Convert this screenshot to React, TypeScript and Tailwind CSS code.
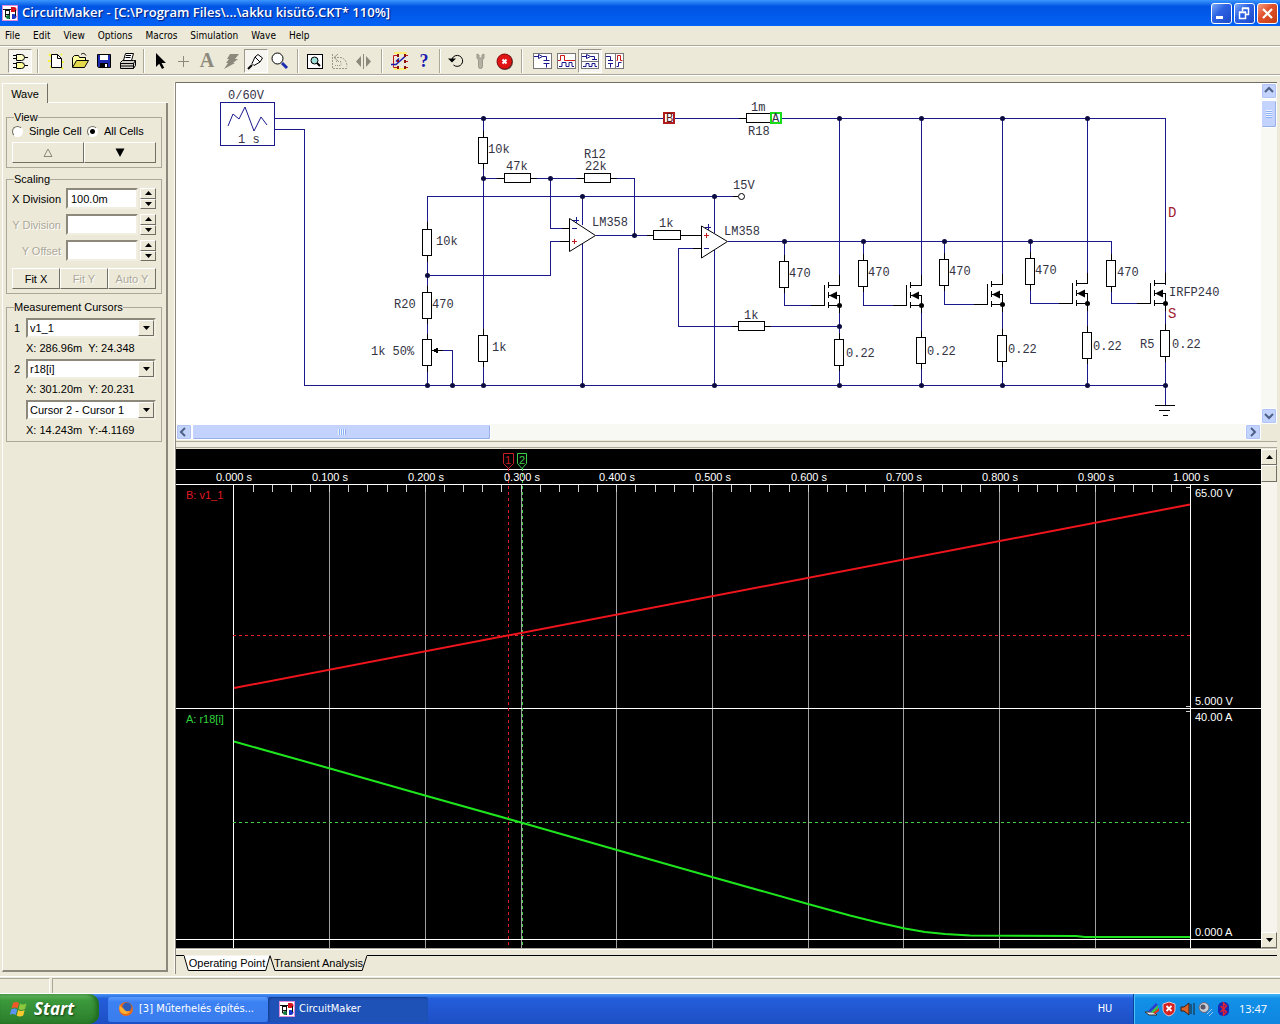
import React from 'react';

const NAVY = '#1a1a8c';

const RAISED = 'border border-t-white border-l-white border-r-[#716f64] border-b-[#716f64] bg-[#ece9d8]';
const SUNKEN = 'border-2 border-t-[#8c897c] border-l-[#8c897c] border-r-[#f1efe2] border-b-[#f1efe2] bg-white';

const AppIcon = ({ className }: { className?: string }) => (
  <svg className={className} viewBox="0 0 16 16" width="16" height="16" aria-hidden="true">
    <rect width="16" height="16" fill="#fff" />
    <rect x="0.5" y="0.5" width="15" height="15" fill="none" stroke="#e08ad8" />
    <path d="M1 4.500h8M3.500 4v8h4M7.500 9v5" stroke="#111" fill="none" />
    <rect x="3.500" y="5.500" width="4" height="4" fill="#fff" stroke="#111" />
    <path d="M9 2h3a2.500 2.500 0 010 5H9z" fill="#d8121f" />
    <path d="M10 9h2a2.500 2.500 0 010 5h-2z" fill="#1b37c9" />
    <circle cx="6" cy="12" r="2" fill="#157c3d" />
    <path d="M13.500 5v6" stroke="#111" />
  </svg>
);

/* ---------- toolbar ---------- */

const icons: Record<string, React.ReactNode> = {
  Gates: (
    <g stroke="#000">
      <path d="M3 4.500h4M3 7.500h4M14 6.500h4M3 12.500h4M3 16.500h4M14 14.500h4" />
      <path d="M6.500 3.500h5a3 3 0 010 6h-5z" fill="#ffffc8" />
      <path d="M6.500 11.500h5a3 3 0 010 6h-5z" fill="#ffff9c" />
    </g>
  ),
  New: (
    <>
      <path d="M3 3l3 3M2 10h3M4 17l2-2M15 16l2 2M16 11h2M15 3l1 1" stroke="#f5f53c" strokeWidth="2" />
      <path d="M5.500 3.500h6l4 4v9h-10z" fill="#fff" stroke="#000" />
      <path d="M11.500 3.500v4h4" fill="none" stroke="#000" />
    </>
  ),
  Open: (
    <>
      <path d="M2.500 16V6.500l2-2h4l1 2h6v3" fill="#ffff9c" stroke="#000" />
      <path d="M2.500 16.500l4-7h12l-4 7z" fill="#e4d94a" stroke="#000" />
      <path d="M11 3.500c2-2 4-1 5 1" fill="none" stroke="#000" />
    </>
  ),
  Save: (
    <>
      <path d="M3.500 3.500h13v13h-12l-1-1z" fill="#1c2bb0" stroke="#000" />
      <rect x="6" y="4" width="8" height="5" fill="#fff" />
      <rect x="6" y="12" width="8" height="5" fill="#000" />
      <rect x="11" y="13" width="2" height="3" fill="#fff" />
    </>
  ),
  Print: (
    <g stroke="#000">
      <path d="M5.500 9.500l2-7h8l-2 7z" fill="#fff" />
      <path d="M8 4.500h5M7.500 6.500h5" />
      <path d="M2.500 11.500l2-2h11l2 0v5l-2 3h-13z" fill="#d4d0c8" />
      <path d="M2.500 12.500h13v5M15.500 12.500l2-3M3 15h12" fill="none" />
    </g>
  ),
  Arrow: <path d="M6 2v14l3.200-3.200L12 18l2.200-1.200-2.600-4.800H16z" fill="#000" />,
  Wire: <path d="M9.500 5v11M4 10.500h11" stroke="#8c897c" strokeWidth="1" />,
  Text: (
    <text x="9" y="16" textAnchor="middle" fill="#8c897c" className="font-['Liberation_Serif',serif] text-[20px] font-bold">
      A
    </text>
  ),
  Delete: <path d="M8 3h9l-4 5h3l-5 4h2L2 18l4-6H4l3-4H5z" fill="#8c897c" />,
  Probe: (
    <>
      <path d="M2 18l4-4" stroke="#000" strokeWidth="2" />
      <path d="M6 12.500l3-6.500 3-2.500 4.500 3.500-2.500 4-6 3.500z" fill="#fff" stroke="#000" />
      <path d="M9 6l5 5" stroke="#000" />
    </>
  ),
  Zoom: (
    <>
      <circle cx="7.500" cy="7.500" r="5.500" fill="#fff" stroke="#000" />
      <path d="M12 12l5 5" stroke="#1c2bb0" strokeWidth="3" />
    </>
  ),
  Preview: (
    <>
      <rect x="1.500" y="3.500" width="15" height="14" fill="#fff" stroke="#000" />
      <circle cx="8.500" cy="9.500" r="3.500" fill="#9fe0d8" stroke="#000" />
      <path d="M11 12l3 3" stroke="#000" strokeWidth="2" />
    </>
  ),
  Rotate: (
    <g fill="none" stroke="#9b988b">
      <path d="M2.500 3v14.500H18M4 6.500h6c4 0 7 4 7 9" strokeDasharray="2 1" />
      <path d="M8 3L4 6.500 8 10" />
      <path d="M5 14.500h6v-4H5" strokeDasharray="1 1" />
    </g>
  ),
  Mirror: (
    <>
      <path d="M9.500 3v15" stroke="#8c897c" />
      <path d="M7 5v11L2 10.500zM12 5v11l5-5.500z" fill="#8c897c" />
    </>
  ),
  Trace: (
    <>
      <rect x="4" y="1" width="13" height="2" fill="#ffee70" />
      <rect x="4" y="17" width="13" height="2" fill="#ffee70" />
      <path d="M18 4.500h-4M8 4.500H3.500v12H8M14 16.500h4M14 10.500h4" stroke="#c01919" fill="none" />
      <path d="M1 13.500h5l9-8M6 10.500l3-3" stroke="#1c1cb0" strokeWidth="1.500" fill="none" />
      <path d="M7 3h2v3H7zM14 3h2v3h-2zM7 9h2v2H7zM14 9h2v3h-2zM7 15h2v3H7zM14 15h2v3h-2z" fill="#8b1010" />
    </>
  ),
  Help: (
    <text x="10" y="16" textAnchor="middle" fill="#1c1cb0" className="font-['Liberation_Serif',serif] text-[18px] font-bold">
      ?
    </text>
  ),
  Reset: (
    <>
      <path d="M6 8a5.500 5.500 0 111.500 6" stroke="#000" fill="none" />
      <path d="M2 7.500h8L6 11.500z" fill="#000" />
    </>
  ),
  Setup: (
    <path
      d="M7 3v4l1.500 2v6.500a2 2 0 004 0V9L14 7V3l-2 1v3H9V4z"
      fill="#b4b1a3"
      stroke="#9b988b"
    />
  ),
  Stop: (
    <>
      <circle cx="11" cy="11" r="8" fill="#555" />
      <circle cx="10.500" cy="10.500" r="7.500" fill="#e01414" stroke="#8b0c0c" />
      <path d="M8.500 8.500l4 4M12.500 8.500l-4 4" stroke="#fff" strokeWidth="2" />
    </>
  ),
  'Schematic view': (
    <>
      <rect x="1.500" y="2.500" width="18" height="15" fill="#fff" stroke="#777" />
      <path d="M2 5.500h4M6.500 3.500v4l4-2zM10.500 5.500h4v4M11.500 9.500h6M11.500 12.500h6M14.500 12.500v4" stroke={NAVY} fill="none" />
    </>
  ),
  'Wave view': (
    <>
      <rect x="1.500" y="2.500" width="18" height="15" fill="#fff" stroke="#777" />
      <path d="M2 9.500h2.500v-5h4v5H19" stroke="#d01919" fill="none" />
      <path d="M3 15.500h3v-4h4v4h3v-4h3v4h2" stroke={NAVY} fill="none" />
    </>
  ),
  'Split horizontal': (
    <>
      <rect x="1.500" y="2.500" width="17" height="15" fill="#fff" stroke="#777" />
      <path d="M2 10.500h16" stroke="#777" />
      <path d="M2 5.500h4M6.500 3.500v4l4-2zM10.500 5.500h4v3M12 8.500h5M3 15.500h3v-3h3v3h3v-3h3v3h2" stroke={NAVY} fill="none" />
    </>
  ),
  'Split vertical': (
    <>
      <rect x="1.500" y="2.500" width="18" height="15" fill="#fff" stroke="#777" />
      <path d="M11.500 3v14" stroke="#777" />
      <path d="M2 5.500h4.500v4M4 9.500h5M4 12.500h5M6.500 12.500v4" stroke={NAVY} fill="none" />
      <path d="M12.500 9.500h1v-5h3v5h2" stroke="#d01919" fill="none" />
      <path d="M12.500 15.500h2v-4h3" stroke={NAVY} fill="none" />
    </>
  ),
};

const ToolButton = ({ name, pressed }: { name: string; pressed?: boolean }) => (
  <button
    aria-label={name}
    title={name}
    className={
      'flex h-6 w-6 items-center justify-center ' +
      (pressed ? 'border border-t-[#9b988b] border-l-[#9b988b] border-r-white border-b-white bg-[#f6f5ef]' : '')
    }
  >
    <svg viewBox="0 0 20 20" className="h-5 w-5 shrink-0 overflow-visible" fill="none">
      {icons[name]}
    </svg>
  </button>
);

const Separator = ({ wide }: { wide?: boolean }) => (
  <div className={'flex h-6 justify-center ' + (wide ? 'w-3' : 'w-2')}>
    <div className="w-[2px] border-l border-r border-l-[#aca899] border-r-white" />
  </div>
);

const Toolbar = () => (
  <div className="flex h-[29px] items-center border-t border-b border-t-white border-b-[#aca899] pl-[8px] shadow-[0_1px_0_#ffffff]">
    <ToolButton name="Gates" pressed />
    <Separator wide />
    {['New', 'Open', 'Save', 'Print'].map((n) => <ToolButton key={n} name={n} />)}
    <Separator />
    {['Arrow', 'Wire', 'Text', 'Delete'].map((n) => <ToolButton key={n} name={n} />)}
    <ToolButton name="Probe" pressed />
    <ToolButton name="Zoom" />
    <Separator wide />
    {['Preview', 'Rotate', 'Mirror'].map((n) => <ToolButton key={n} name={n} />)}
    <Separator wide />
    {['Trace', 'Help'].map((n) => <ToolButton key={n} name={n} />)}
    <Separator />
    {['Reset', 'Setup', 'Stop'].map((n) => <ToolButton key={n} name={n} />)}
    <Separator wide />
    <div className="flex pl-[2px]">
      <ToolButton name="Schematic view" />
      <ToolButton name="Wave view" />
      <ToolButton name="Split horizontal" pressed />
      <ToolButton name="Split vertical" />
    </div>
  </div>
);

/* ---------- title bar ---------- */

const TitleBar = () => (
  <header className="flex h-[26px] items-center bg-linear-to-b from-[#3c96ff] via-[#0054e3] via-25% to-[#0462f5] pr-[2px] pl-[2px]">
    <AppIcon />
    <h1 className="ml-1 flex-1 font-['Open_Sans','Noto_Sans',sans-serif] text-[13px] font-semibold whitespace-nowrap text-white [text-shadow:1px_1px_1px_#00187a]">
      {'CircuitMaker - [C:\\Program Files\\...\\akku kisütő.CKT* 110%]'}
    </h1>
    <div className="flex gap-[2px]">
      {['Minimize', 'Restore', 'Close'].map((n) => (
        <button
          key={n}
          aria-label={n}
          className={
            'h-[21px] w-[21px] rounded-[3px] border border-white ' +
            (n === 'Close'
              ? 'bg-linear-to-br from-[#f09a80] via-[#e2532d] via-40% to-[#c33c12]'
              : 'bg-linear-to-br from-[#7fa8f5] via-[#2e63e4] via-40% to-[#1c49c8]')
          }
        >
          <svg viewBox="0 0 19 19" className="h-[19px] w-[19px]" fill="none" stroke="#fff">
            {n === 'Minimize' && <path d="M4 13.500h7" strokeWidth="3" />}
            {n === 'Restore' && <path d="M4.500 8.500h6v6h-6zM4 8h7M7.500 7V4.500h6v6H11M7 4h7" strokeWidth="1.500" />}
            {n === 'Close' && <path d="M5 5l9 9M14 5l-9 9" strokeWidth="2.200" />}
          </svg>
        </button>
      ))}
    </div>
  </header>
);

const MenuBar = () => (
  <nav className="flex h-5 items-center gap-[13px] border-b border-[#aca899] pl-[5px] font-['DejaVu_Sans_Condensed','DejaVu_Sans',sans-serif] text-[10px]">
    {['File', 'Edit', 'View', 'Options', 'Macros', 'Simulation', 'Wave', 'Help'].map((m) => (
      <button key={m}>{m}</button>
    ))}
  </nav>
);

/* ---------- wave panel ---------- */

const Group = ({ title, className, children }: { title: string; className: string; children: React.ReactNode }) => (
  <fieldset className={'min-w-0 border border-[#aca899] px-[5px] pb-1 ' + className}>
    <legend className="ml-[2px] h-[14px] leading-[14px]">{title}</legend>
    {children}
  </fieldset>
);

const DivisionRow = ({ id, label, value, disabled }: { id: string; label: string; value?: string; disabled?: boolean }) => (
  <div className="flex h-[21px] items-center">
    <label
      htmlFor={id}
      className={'flex-1 pr-[5px] text-right whitespace-nowrap ' + (disabled ? 'text-[#aca899] [text-shadow:1px_1px_0_#fff]' : '')}
    >
      {label}
    </label>
    <input id={id} defaultValue={value} disabled={disabled} className={'h-[21px] w-[72px] shrink-0 pl-[3px] ' + SUNKEN} />
    <div className="ml-[2px] flex h-[21px] w-4 shrink-0 flex-col">
      <button aria-label={label + ' up'} className={'flex flex-1 items-center justify-center ' + RAISED}>
        <svg viewBox="0 0 7 4" className="h-1 w-[7px]"><path d="M0 4l3.500-4L7 4z" /></svg>
      </button>
      <button aria-label={label + ' down'} className={'flex flex-1 items-center justify-center ' + RAISED}>
        <svg viewBox="0 0 7 4" className="h-1 w-[7px]"><path d="M0 0l3.500 4L7 0z" /></svg>
      </button>
    </div>
  </div>
);

const CursorRow = ({ n, value, reading }: { n?: string; value: string; reading: string }) => (
  <div className="grid grid-cols-[14px_130px]">
    <span className="pt-[3px] pl-[2px]">{n}</span>
    <div className="relative h-5">
      <select aria-label={n ? 'Cursor ' + n : 'Difference'} className={'h-5 w-full appearance-none pl-[2px] ' + SUNKEN}>
        <option>{value}</option>
      </select>
      <span className={'pointer-events-none absolute top-[2px] right-[2px] flex h-4 w-4 items-center justify-center ' + RAISED}>
        <svg viewBox="0 0 7 4" className="h-1 w-[7px]"><path d="M0 0l3.500 4L7 0z" /></svg>
      </span>
    </div>
    <p className="col-start-2 mt-[3px] h-[14px] leading-[14px] whitespace-pre">{reading}</p>
  </div>
);

const WavePanel = () => (
  <aside className="flex w-[175px] shrink-0 flex-col border-r border-[#fbfaf5] pt-px pr-[6px] pb-[2px] pl-[2px] font-['Liberation_Sans',Arial,sans-serif] text-[11px] leading-[14px]">
    <div className="flex h-5">
      <button className="w-[46px] border-t border-r border-l border-t-white border-r-[#716f64] border-l-white">Wave</button>
      <div className="flex-1 border-b border-white" />
    </div>
    <div className="flex-1 border-r-2 border-b-2 border-l border-r-[#8c897c] border-b-[#8c897c] border-l-white pt-[7px] pr-1 pl-[3px]">
      <Group title="View" className="">
        <div className="flex h-[14px] items-center">
          <label className="flex w-[75px] items-center gap-[6px] whitespace-nowrap">
            <input type="radio" name="cells" className="h-[11px] w-[11px] appearance-none rounded-full border border-t-[#716f64] border-l-[#716f64] border-r-white border-b-white bg-white" />
            Single Cell
          </label>
          <label className="flex items-center gap-[6px] whitespace-nowrap">
            <input type="radio" name="cells" defaultChecked className="h-[11px] w-[11px] appearance-none rounded-full border border-t-[#716f64] border-l-[#716f64] border-r-white border-b-white bg-[radial-gradient(circle,#000_2px,#fff_3px)]" />
            All Cells
          </label>
        </div>
        <div className="mt-1 flex h-[21px]">
          <button aria-label="Previous cell" className={'flex flex-1 items-center justify-center ' + RAISED}>
            <svg viewBox="0 0 10 9" className="h-[9px] w-[10px]"><path d="M1 8.500L5 1l4 7.500z" fill="none" stroke="#8c897c" /></svg>
          </button>
          <button aria-label="Next cell" className={'flex flex-1 items-center justify-center ' + RAISED}>
            <svg viewBox="0 0 10 9" className="h-[9px] w-[10px]"><path d="M0.500 0.500h9L5 9z" /></svg>
          </button>
        </div>
      </Group>
      <Group title="Scaling" className="mt-1">
        <div className="flex flex-col gap-[5px] pt-[2px]">
          <DivisionRow id="xdiv" label="X Division" value="100.0m" />
          <DivisionRow id="ydiv" label="Y Division" disabled />
          <DivisionRow id="yoff" label="Y Offset" disabled />
        </div>
        <div className="mt-[7px] flex h-[21px]">
          <button className={'flex-1 ' + RAISED}>Fit X</button>
          <button disabled className={'flex-1 text-[#aca899] [text-shadow:1px_1px_0_#fff] ' + RAISED}>Fit Y</button>
          <button disabled className={'flex-1 whitespace-nowrap text-[#aca899] [text-shadow:1px_1px_0_#fff] ' + RAISED}>Auto Y</button>
        </div>
      </Group>
      <Group title="Measurement Cursors" className="mt-[6px]">
        <div className="flex flex-col gap-1 pt-1">
          <CursorRow n="1" value="v1_1" reading="X: 286.96m  Y: 24.348" />
          <CursorRow n="2" value="r18[i]" reading="X: 301.20m  Y: 20.231" />
          <CursorRow value="Cursor 2 - Cursor 1" reading="X: 14.243m  Y:-4.1169" />
        </div>
      </Group>
    </div>
  </aside>
);

/* ---------- schematic ---------- */

const VResistor = ({ x, y }: { x: number; y: number }) => (
  <rect x={x - 5} y={y} width="9" height="26" fill="#fff" stroke="#000" />
);

const HResistor = ({ x, y, w = 26 }: { x: number; y: number; w?: number }) => (
  <rect x={x} y={y - 5} width={w} height="9" fill="#fff" stroke="#000" />
);

// gate resistor x/y, drain x, gate wire y, source resistor y
const stages = [
  { g: 784, gy: 261, d: 839, y: 305, sy: 339 },
  { g: 863, gy: 260, d: 921, y: 305, sy: 337 },
  { g: 944, gy: 259, d: 1002, y: 304, sy: 335 },
  { g: 1030, gy: 258, d: 1087, y: 303, sy: 332 },
  { g: 1111, gy: 260, d: 1165, y: 303, sy: 330 },
];

const nodes = [
  [483, 118], [483, 178], [550, 178], [582, 196], [714, 196], [634, 235], [427, 275],
  [839, 118], [921, 118], [1002, 118], [1087, 118],
  [784, 241], [863, 241], [944, 241], [1030, 241], [839, 326],
  [427, 385], [452, 385], [483, 385], [582, 385], [714, 385],
  [839, 385], [921, 385], [1002, 385], [1087, 385], [1165, 385],
];

const labels: [number, number, string][] = [
  [228, 99, '0/60V'], [238, 143, '1 s'], [488, 153, '10k'], [506, 170, '47k'], [584, 158, 'R12'],
  [585, 170, '22k'], [436, 245, '10k'], [394, 308, 'R20'], [432, 308, '470'], [371, 355, '1k 50%'],
  [492, 351, '1k'], [592, 226, 'LM358'], [659, 227, '1k'], [724, 235, 'LM358'], [733, 189, '15V'],
  [744, 319, '1k'], [751, 111, '1m'], [748, 135, 'R18'], [789, 277, '470'], [868, 276, '470'],
  [949, 275, '470'], [1035, 274, '470'], [1117, 276, '470'], [846, 357, '0.22'], [927, 355, '0.22'],
  [1008, 353, '0.22'], [1093, 350, '0.22'], [1172, 348, '0.22'], [1140, 348, 'R5'], [1169, 296, 'IRFP240'],
];

const Schematic = () => (
  <svg
    viewBox="176 83 1085 341"
    width="1085"
    height="341"
    className="block font-['Liberation_Mono','Courier_New',monospace] text-[12px]"
    shapeRendering="crispEdges"
  >
    <g fill="none" stroke={NAVY}>
      <rect x="220" y="102" width="54" height="43" />
      <path d="M275 118H1165V285M275 129H304V385H1165V405" />
      <path d="M483 118V385M427 385V196H738M427 275H550V241H569M483 178H634V235M550 178V228H569" />
      <path d="M582 196V225M582 244V385M714 196V233M714 250V385M596 235H701M728 241H1111V260" />
      <path d="M701 248H678V326H839M432 350H452V385" />
      {stages.map((s) => (
        <path key={s.g} d={`M${s.g} 241V${s.y}H${s.d - 20}M${s.d} 118V${s.y - 24}M${s.d} ${s.y + 8}V385`} />
      ))}
    </g>
    <path d="M228 126l5-12 6 5 6-12 9 24 7-14 6 8" fill="none" stroke={NAVY} shapeRendering="auto" />

    <g fill="none" stroke="#000">
      <path d="M483 131v6M483 163v6M483 329v6M483 361v6M427 222v7M427 256v6M427 286v6M427 318v6M427 334v5M427 366v6" />
      <path d="M497 178h7M530 178h7M577 178h7M610 178h7M647 235h6M680 235h21M739 118h7M732 326h6M764 326h7M733 196h5" />
      <path d="M562 228h7M560 241h9M693 248h8M435 350h8" />
      <path d="M1155 405h20M1159 410h11M1163 415h5" />
    </g>
    <VResistor x={483} y={137} />
    <VResistor x={483} y={335} />
    <VResistor x={427} y={229} />
    <VResistor x={427} y={292} />
    <VResistor x={427} y={339} />
    <HResistor x={504} y={178} />
    <HResistor x={584} y={178} />
    <HResistor x={653} y={235} w={27} />
    <HResistor x={738} y={326} />
    <HResistor x={746} y={118} />
    <path d="M432 350.500l6-3v6z" />

    <g fill="none" stroke="#000" shapeRendering="auto">
      <path d="M569.500 218.500v33l26-16z" />
      <path d="M701.500 226v32l26-16.500z" />
      <circle cx="741.500" cy="196.500" r="3" fill="#fff" />
    </g>
    <path d="M573 220h6M576 217v6M705 227h6M708 224v6M572 228h5M704 248h5" stroke={NAVY} />
    <path d="M572 241h5M574 239v5M704 235h5M706 233v5" stroke="#c01919" />

    {stages.map((s) => (
      <g key={s.d}>
        <VResistor x={s.g} y={s.gy} />
        <VResistor x={s.d} y={s.sy} />
        <path
          fill="none"
          stroke="#000"
          d={`M${s.g} ${s.gy - 6}v6M${s.g} ${s.gy + 26}v6M${s.d} ${s.sy - 6}v6M${s.d} ${s.sy + 26}v6
            M${s.d - 28} ${s.y}h13v-20M${s.d - 11} ${s.y - 23}v6M${s.d - 11} ${s.y - 13}v6M${s.d - 11} ${s.y - 3}v6
            M${s.d} ${s.y - 30}v10h-11M${s.d - 11} ${s.y - 10}h11v10h-11M${s.d} ${s.y}v8`}
        />
        <path d={`M${s.d - 10} ${s.y - 9.500}l8-4v8z`} shapeRendering="auto" />
        <circle cx={s.d + 0.5} cy={s.y + 0.5} r="2.500" shapeRendering="auto" />
      </g>
    ))}
    {nodes.map(([x, y]) => (
      <circle key={x + '-' + y} cx={x + 0.5} cy={y + 0.5} r="2.500" fill="#0b0b40" shapeRendering="auto" />
    ))}

    <g fill="#333344">
      {labels.map(([x, y, t]) => (
        <text key={x + '-' + y} x={x} y={y}>{t}</text>
      ))}
    </g>
    <g className="text-[14px]" fill="#a02030">
      <text x="1168" y="217">D</text>
      <text x="1168" y="318">S</text>
    </g>
    <rect x="664" y="113" width="10" height="10" fill="#fff" stroke="#b01c1c" strokeWidth="2" />
    <rect x="771" y="113" width="10" height="10" fill="#fff" stroke="#18dc18" strokeWidth="2" />
    <text x="666" y="122" fill="#5a1515">B</text>
    <text x="772" y="122" fill="#333344">A</text>
  </svg>
);

const ScrollArrow = ({ dir }: { dir: 'up' | 'down' | 'left' | 'right' }) => {
  const d = { up: 'M4 9l4-4 4 4', down: 'M4 6l4 4 4-4', left: 'M9 4L5 8l4 4', right: 'M6 4l4 4-4 4' }[dir];
  return (
    <button aria-label={'Scroll ' + dir} className="h-4 w-4 shrink-0 rounded-[2px] border border-white bg-[#c3d3fd] shadow-[inset_0_0_0_1px_#b0c5f5]">
      <svg viewBox="1 1 14 14" className="h-[14px] w-[14px]" fill="none" stroke="#4d6185" strokeWidth="2">
        <path d={d} />
      </svg>
    </button>
  );
};

const SchematicPane = () => (
  <section className="flex border-t border-[#716f64]">
    <div className="min-w-0 flex-1">
      <div className="h-[341px] overflow-hidden bg-white">
        <Schematic />
      </div>
      <div className="flex h-4 bg-[#f9f9f4]">
        <ScrollArrow dir="left" />
        <div className="flex w-[299px] items-center justify-center rounded-[2px] border border-white bg-[#c3d3fd] shadow-[inset_-1px_-1px_0_#98b0e8]">
          <div className="h-[6px] w-2 bg-[repeating-linear-gradient(to_right,#eef4fe_0_1px,#8cb0f8_1px_2px)]" />
        </div>
        <div className="flex-1" />
        <ScrollArrow dir="right" />
      </div>
    </div>
    <div className="flex w-4 flex-col bg-[#f9f9f4]">
      <ScrollArrow dir="up" />
      <div className="mt-px flex h-7 items-center justify-center rounded-[2px] border border-white bg-[#c3d3fd] shadow-[inset_-1px_-1px_0_#98b0e8]">
        <div className="h-2 w-[6px] bg-[repeating-linear-gradient(to_bottom,#eef4fe_0_1px,#8cb0f8_1px_2px)]" />
      </div>
      <div className="flex-1" />
      <ScrollArrow dir="down" />
      <div className="h-4 bg-[#ece9d8]" />
    </div>
  </section>
);

/* ---------- waveforms ---------- */

const X0 = 233;
const X1 = 1190;
const STEP = (X1 - X0) / 10;
const divisions = Array.from({ length: 11 }, (_, i) => i);

const WaveChart = () => (
  <svg
    viewBox="176 449 1085 499"
    className="block h-auto w-full bg-black font-['Liberation_Sans',Arial,sans-serif] text-[11px]"
    shapeRendering="crispEdges"
  >
    <g stroke="#a0a0a0">
      {divisions.slice(1, 10).map((i) => (
        <path key={i} d={`M${Math.ceil(X0 + i * STEP)} 485V948`} />
      ))}
      {Array.from({ length: 50 }, (_, i) => (
        <path key={i} d={`M${Math.ceil(X0 + (i * STEP) / 5)} 485v7`} stroke="#cfcfcf" />
      ))}
      <path d="M1186 487h4M1186 706h4M1186 711h4" stroke="#cfcfcf" />
    </g>
    <path d="M176 469H1261M176 484H1261M176 708H1261M176 939H1261M233 484V948M1190 484V948" stroke="#fff" />

    <g fill="none" strokeDasharray="3 3">
      <path d="M233 635H1190" stroke="#f01c2c" />
      <path d="M508 468V948" stroke="#e0182c" />
      <path d="M233 822H1190M522 468V948" stroke="#3ecf4c" />
    </g>
    <g fill="none" shapeRendering="auto">
      <path d="M503.500 453.500h10v10l-5 5-5-5z" stroke="#c81e28" />
      <path d="M517.500 453.500h9v10l-4.500 5-4.500-5z" stroke="#3ecf4c" />
      <path d="M234 688L1190 504.500" stroke="#f0141c" strokeWidth="2" />
      <path
        d="M234 741.500L330 768.500 425 795.500 521 822.500 617 850 712 877 808 904 850 915.500 880 923 905 928.500 925 932 945 934 970 935.500 1076 936 1085 937H1190"
        stroke="#1ee61e"
        strokeWidth="2"
      />
    </g>
    <text x="505" y="464" fill="#c81e28">1</text>
    <text x="519" y="464" fill="#3ecf4c">2</text>

    <g fill="#fff">
      {divisions.map((i) => (
        <text key={i} x={Math.ceil(X0 + i * STEP) + 1} y="481" textAnchor="middle">{(i / 10).toFixed(3)} s</text>
      ))}
      <text x="1195" y="497">65.00 V</text>
      <text x="1195" y="705">5.000 V</text>
      <text x="1195" y="721">40.00 A</text>
      <text x="1195" y="936">0.000 A</text>
    </g>
    <text x="186" y="499" fill="#e01820">B: v1_1</text>
    <text x="186" y="723" fill="#2fd43a">A: r18[i]</text>
  </svg>
);

const Tab = ({ label, active, className }: { label: string; active?: boolean; className: string }) => (
  <button className={'relative h-4 whitespace-nowrap ' + className}>
    <svg viewBox="0 0 100 16" preserveAspectRatio="none" className="absolute inset-0 h-4 w-full" aria-hidden="true">
      <path
        d="M0 0.500L5 15.500H95L100 0.500"
        fill={active ? '#fff' : '#ece9d8'}
        stroke="#000"
        vectorEffect="non-scaling-stroke"
      />
    </svg>
    <span className="relative">{label}</span>
  </button>
);

const WavePane = () => (
  <section className="font-['Liberation_Sans',Arial,sans-serif] text-[11px] leading-[16px]">
    <div className="flex">
      <div className="min-w-0 flex-1">
        <WaveChart />
      </div>
      <div className="flex w-4 flex-col bg-[#f6f4ec]">
        <button aria-label="Scroll waves up" className={'flex h-4 items-center justify-center ' + RAISED}>
          <svg viewBox="0 0 7 4" className="h-1 w-[7px]"><path d="M0 4l3.500-4L7 4z" /></svg>
        </button>
        <div className={'h-[17px] ' + RAISED} />
        <div className="flex-1" />
        <button aria-label="Scroll waves down" className={'flex h-4 items-center justify-center ' + RAISED}>
          <svg viewBox="0 0 7 4" className="h-1 w-[7px]"><path d="M0 0l3.500 4L7 0z" /></svg>
        </button>
      </div>
    </div>
    <div className="h-[7px] border-t border-[#aca899] shadow-[inset_0_1px_0_#fff]" />
    <div className="flex">
      <div className="w-2 border-t border-black" />
      <Tab label="Operating Point" active className="w-[86px]" />
      <Tab label="Transient Analysis" className="w-[97px]" />
      <div className="flex-1 border-t border-black" />
    </div>
  </section>
);

/* ---------- taskbar ---------- */

const Taskbar = () => (
  <footer className="flex h-[30px] items-stretch bg-linear-to-b from-[#4b95f5] via-[#245edb] via-15% to-[#1d4fc4] font-['DejaVu_Sans_Condensed','DejaVu_Sans',sans-serif] text-[10px] text-white">
    <button className="flex w-[99px] items-center gap-[6px] rounded-r-[10px] bg-linear-to-b from-[#6fbf6b] via-[#3c9a3c] via-20% to-[#2b7d2b] pl-[10px] shadow-[inset_-3px_0_4px_#1f6a1f]">
      <svg viewBox="0 0 18 18" className="h-[18px] w-[18px]" aria-hidden="true">
        <path d="M3 3c2-1.500 4-1.500 6 0L7.500 8.500c-2-1.500-4-1.500-6 0z" fill="#f0582a" />
        <path d="M10 3.500c2 1.200 4 1.200 6.500 0L15 9c-2.500 1.200-4.500 1.200-6.500 0z" fill="#8cc63e" />
        <path d="M1.200 9.500c2-1.500 4-1.500 6 0L5.700 15c-2-1.500-4-1.500-6 0z" fill="#5a93f0" />
        <path d="M8.200 10c2 1.200 4 1.200 6.500 0l-1.500 5.500c-2.500 1.200-4.500 1.200-6.500 0z" fill="#fbc832" />
      </svg>
      <span className="font-['Open_Sans','Noto_Sans',sans-serif] text-[17px] font-bold italic [text-shadow:1px_1px_2px_#123f12]">Start</span>
    </button>
    <div className="flex flex-1 items-center py-[2px] pl-[9px]">
      <button className="flex h-[25px] w-40 items-center gap-[5px] rounded-[3px] bg-linear-to-b from-[#5a9bfb] via-[#3c81f3] via-20% to-[#3a7cee] pl-[10px] text-left">
        <svg viewBox="0 0 16 16" className="h-4 w-4 shrink-0" aria-hidden="true">
          <circle cx="8" cy="8" r="7" fill="#e66a1c" />
          <circle cx="9" cy="6" r="4.500" fill="#2b5cb8" />
          <path d="M2 3c0 4 3 3 4 5s3 3 6 2c-1 3-5 4-8 2S1 6 2 3z" fill="#fbb034" />
        </svg>
        <span className="truncate text-[11px]">[3] Műterhelés építés...</span>
      </button>
      <button className="flex h-[25px] w-40 items-center gap-1 rounded-[3px] bg-[#1e52b7] pl-[11px] text-left shadow-[inset_1px_1px_2px_#143c8c]">
        <AppIcon className="shrink-0" />
        <span className="text-[11px]">CircuitMaker</span>
      </button>
    </div>
    <div className="flex w-[56px] items-center justify-center text-[11px]">HU</div>
    <div className="flex w-[147px] items-center border-l border-[#0a3f9c] bg-linear-to-b from-[#3db4f7] via-[#1290e8] via-15% to-[#0f86e0] pl-[11px] shadow-[inset_1px_0_0_#4cc0f8]">
      <svg viewBox="0 0 86 16" className="h-4 w-[86px]" aria-hidden="true">
        <path d="M0 11h9l3 3H4z" fill="#e8e8e8" stroke="#333" />
        <path d="M3 10l8-8 2 2-7 7z" fill="#2b3fd0" />
        <path d="M6 11l7-7v3l-4 5z" fill="#3cc83c" />
        <path d="M8 12l6-5v3l-4 3z" fill="#e0301c" />
        <path d="M24 1l6 2v5c0 4-3 6-6 7-3-1-6-3-6-7V3z" fill="#d82020" stroke="#e8c8c8" />
        <path d="M21.500 5l5 5M26.500 5l-5 5" stroke="#fff" strokeWidth="1.800" />
        <path d="M36 6h3l5-4v12l-5-4h-3z" fill="#d8642c" stroke="#3a1c10" />
        <path d="M46 3v10M49 2v12" stroke="#222" fill="none" />
        <circle cx="59" cy="6.500" r="5" fill="#c8ccd4" stroke="#667" />
        <circle cx="58" cy="6" r="2.500" fill="#556" />
        <path d="M62 13l5-5M64 15l4-4" stroke="#9cc4ee" />
        <rect x="73" y="1" width="11" height="14" rx="5" fill="#1428b4" />
        <path d="M75.500 5l6 6-3 3V2l3 3-6 6" stroke="#e02030" strokeWidth="1.500" fill="none" />
      </svg>
      <span className="ml-2 font-['Open_Sans','Noto_Sans',sans-serif] text-[11px]">13:47</span>
    </div>
  </footer>
);

const App: React.FC = () => {
  return (
    <div className="flex min-h-screen flex-col bg-[#ece9d8] text-black">
      <TitleBar />
      <MenuBar />
      <Toolbar />
      <main className="flex flex-1 pt-[7px]">
        <WavePanel />
        <div className="min-w-0 flex-1 border-l border-[#8c897c] pr-[3px]">
          <SchematicPane />
          <div className="my-px h-[7px] border-t border-b border-[#aca899] bg-[#f1efe2]" />
          <WavePane />
        </div>
      </main>
      <div className="mt-[2px] flex h-[18px] gap-[2px] border-t border-b border-white pt-px">
        <div className="w-[50px] border-t border-r border-t-[#aca899] border-r-white" />
        <div className="flex-1 border-t border-l border-[#aca899]" />
      </div>
      <Taskbar />
    </div>
  );
};

export default App;
